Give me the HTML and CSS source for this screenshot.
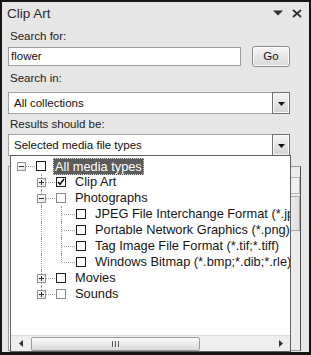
FILE: index.html
```html
<!DOCTYPE html>
<html>
<head>
<meta charset="utf-8">
<title>Clip Art</title>
<link rel="stylesheet" href="styles.css">
</head>
<body>
<div class="frame">
  <div class="titlebar">
    <span class="title">Clip Art</span>
    <svg class="tb-menu" width="10" height="6" viewBox="0 0 10 6"><path d="M0 0.5H10L5 5.5Z" fill="#2e2e2e"/></svg>
    <svg class="tb-close" width="10" height="9" viewBox="0 0 10 9"><path d="M1 1L9 8M9 1L1 8" stroke="#2e2e2e" stroke-width="1.7"/></svg>
  </div>
  <div class="content">
    <div class="label lbl-search">Search for:</div>
    <div class="search-row">
      <div class="textbox">flower</div>
      <div class="btn-go">Go</div>
    </div>
    <div class="label lbl-in">Search in:</div>
    <div class="combo combo-in">
      <span class="combo-text">All collections</span>
      <span class="combo-btn"><svg width="7" height="4" viewBox="0 0 7 4"><path d="M0 0H7L3.5 4Z" fill="#111"/></svg></span>
    </div>
    <div class="label lbl-res">Results should be:</div>
    <div class="combo combo-res">
      <span class="combo-text">Selected media file types</span>
      <span class="combo-btn"><svg width="7" height="4" viewBox="0 0 7 4"><path d="M0 0H7L3.5 4Z" fill="#111"/></svg></span>
    </div>
    <div class="results">
      <div class="results-area"></div>
      <div class="vscroll">
        <div class="vs-up"></div>
        <div class="vs-thumb"></div>
      </div>
    </div>
  </div>

  <div class="popup">
    <div class="tree">
      <div class="row">
        <span class="cell hl"><span class="box minus"></span></span>
        <span class="cb"></span>
        <span class="txt sel">All media types</span>
      </div>
      <div class="row">
        <span class="guide"></span>
        <span class="cell hl vfull"><span class="box plus"></span></span>
        <span class="cb checked"><svg width="8" height="8" viewBox="0 0 8 8"><path d="M1 4L3 6.3L7 1" fill="none" stroke="#111" stroke-width="1.6"/></svg></span>
        <span class="txt">Clip Art</span>
      </div>
      <div class="row">
        <span class="guide"></span>
        <span class="cell hl vfull"><span class="box minus"></span></span>
        <span class="cb gray"></span>
        <span class="txt">Photographs</span>
      </div>
      <div class="row">
        <span class="guide"></span>
        <span class="guide v"></span>
        <span class="cell hl vfull"></span>
        <span class="cb"></span>
        <span class="txt">JPEG File Interchange Format (*.jpg)</span>
      </div>
      <div class="row">
        <span class="guide"></span>
        <span class="guide v"></span>
        <span class="cell hl vfull"></span>
        <span class="cb"></span>
        <span class="txt">Portable Network Graphics (*.png)</span>
      </div>
      <div class="row">
        <span class="guide"></span>
        <span class="guide v"></span>
        <span class="cell hl vfull"></span>
        <span class="cb"></span>
        <span class="txt">Tag Image File Format (*.tif;*.tiff)</span>
      </div>
      <div class="row">
        <span class="guide"></span>
        <span class="guide v"></span>
        <span class="cell hl vhalf"></span>
        <span class="cb"></span>
        <span class="txt">Windows Bitmap (*.bmp;*.dib;*.rle)</span>
      </div>
      <div class="row">
        <span class="guide"></span>
        <span class="cell hl vfull"><span class="box plus"></span></span>
        <span class="cb"></span>
        <span class="txt">Movies</span>
      </div>
      <div class="row">
        <span class="guide"></span>
        <span class="cell hl vhalf"><span class="box plus"></span></span>
        <span class="cb gray"></span>
        <span class="txt">Sounds</span>
      </div>
    </div>
    <div class="hscroll">
      <span class="hs-btn"><svg width="4" height="7" viewBox="0 0 4 7"><path d="M4 0V7L0 3.5Z" fill="#333"/></svg></span>
      <span class="hs-thumb"><span class="grip"></span></span>
      <span class="hs-track"></span>
      <span class="hs-btn"><svg width="4" height="7" viewBox="0 0 4 7"><path d="M0 0V7L4 3.5Z" fill="#333"/></svg></span>
    </div>
  </div>
</div>
</body>
</html>
```

FILE: styles.css
```css
* {
  box-sizing: border-box;
  margin: 0;
  padding: 0;
}

html, body {
  width: 311px;
  height: 355px;
  overflow: hidden;
  background: #e6e6e6;
}

body {
  font-family: "Liberation Sans", Arial, sans-serif;
  font-size: 11.5px;
  color: #1f1f1f;
}

.frame {
  position: relative;
  width: 311px;
  height: 355px;
  border-style: solid;
  border-color: #161616;
  border-width: 2px 2px 3px 2px;
  background: #e6e6e6;
  display: flex;
  flex-direction: column;
}

/* title bar */
.titlebar {
  height: 22px;
  display: flex;
  align-items: center;
  padding: 0 7px 0 5px;
  flex: none;
}

.title {
  flex: 1;
  font-size: 13.5px;
  color: #2c2c2c;
}

.tb-menu {
  display: block;
  margin-right: 9px;
}

.tb-close {
  display: block;
}

/* body of the pane */
.content {
  flex: 1;
  display: flex;
  flex-direction: column;
  padding: 0 19px 0 6px;
}

.label {
  height: 14px;
  line-height: 14px;
  padding-left: 2px;
  color: #222;
  white-space: nowrap;
}

.lbl-search { margin-top: 5px; }
.lbl-in { margin-top: 4px; }
.lbl-res { margin-top: 3px; }

.search-row {
  margin-top: 3px;
  height: 21px;
  display: flex;
  align-items: center;
}

.textbox {
  width: 233px;
  height: 19px;
  line-height: 17px;
  background: #fff;
  border: 1px solid #9c9c9c;
  padding-left: 2px;
  color: #111;
}

.btn-go {
  margin-left: auto;
  width: 38px;
  height: 21px;
  line-height: 19px;
  text-align: center;
  border: 1px solid #8a8a8a;
  border-radius: 3px;
  background: linear-gradient(#f7f7f7, #e6e6e6 50%, #d9d9d9);
  box-shadow: inset 0 0 0 1px #fbfbfb;
  color: #111;
}

.combo {
  height: 22px;
  display: flex;
  align-items: stretch;
  background: #fff;
  border: 1px solid #a3a3a3;
}

.combo-in { margin-top: 7px; }
.combo-res { margin-top: 3px; }

.combo-text {
  flex: 1;
  line-height: 20px;
  padding-left: 5px;
  color: #111;
  white-space: nowrap;
}

.combo-btn {
  width: 18px;
  margin: -1px -1px -1px 0;
  border: 1px solid #6f6f6f;
  background: linear-gradient(#f6f6f6, #e2e2e2 55%, #d4d4d4);
  box-shadow: inset 0 0 0 1px #fafafa;
  display: flex;
  align-items: center;
  justify-content: center;
}

.combo-btn svg {
  display: block;
  margin-top: 1px;
}

/* underlying results list (mostly hidden by the dropdown) */
.results {
  flex: 1;
  margin-top: 10px;
  margin-right: -11px;
  margin-bottom: 1px;
  display: flex;
  border: 1px solid #9a9a9a;
  border-right-color: #4e4e4e;
  background: #fff;
}

.results-area {
  flex: 1;
}

.vscroll {
  width: 16px;
  background: #ececec;
  display: flex;
  flex-direction: column;
}

.vs-up {
  margin-top: 10px;
  height: 17px;
  border: 1px solid #b5b5b5;
  background: #f0f0f0;
}

.vs-thumb {
  margin-top: 2px;
  height: 35px;
  border: 1px solid #a8a8a8;
  background: linear-gradient(90deg, #f4f4f4, #dedede);
}

/* dropdown tree */
.popup {
  position: absolute;
  left: 8px;
  top: 153px;
  width: 281px;
  height: 197px;
  border: 1px solid #5f5f5f;
  background: #fff;
  display: flex;
  flex-direction: column;
}

.tree {
  flex: 1;
  overflow: hidden;
  padding-top: 2px;
  font-size: 12.8px;
  color: #161616;
}

.row {
  height: 16px;
  display: flex;
  align-items: center;
  padding-left: 6px;
  white-space: nowrap;
}

.guide {
  flex: none;
  width: 20px;
  height: 16px;
  position: relative;
}

.guide.v::before {
  content: "";
  position: absolute;
  left: 4px;
  top: 0;
  bottom: 0;
  border-left: 1px dotted #9a9a9a;
}

.cell {
  flex: none;
  width: 19px;
  height: 16px;
  position: relative;
}

.cell.hl::after {
  content: "";
  position: absolute;
  left: 5px;
  right: 1px;
  top: 8px;
  border-top: 1px dotted #9a9a9a;
}

.cell.vfull::before,
.cell.vhalf::before {
  content: "";
  position: absolute;
  left: 4px;
  top: 0;
  border-left: 1px dotted #9a9a9a;
}

.cell.vfull::before { bottom: 0; }
.cell.vhalf::before { height: 8px; }

.box {
  position: absolute;
  left: 0;
  top: 4px;
  width: 9px;
  height: 9px;
  border: 1px solid #959595;
  background: linear-gradient(135deg, #ffffff, #e4e4e4);
  z-index: 1;
}

.box::before {
  content: "";
  position: absolute;
  left: 1px;
  top: 3px;
  width: 5px;
  height: 1px;
  background: #333;
}

.box.plus::after {
  content: "";
  position: absolute;
  left: 3px;
  top: 1px;
  width: 1px;
  height: 5px;
  background: #333;
}

.cb {
  flex: none;
  width: 10px;
  height: 10px;
  border: 1px solid #1c1c1c;
  background: #fff;
  display: flex;
  align-items: center;
  justify-content: center;
}

.cb.gray {
  border-color: #8c8c8c;
}

.cb svg {
  display: block;
}

.txt {
  margin-left: 7px;
  padding: 0 2px;
  line-height: 16px;
}

.txt.sel {
  background: #5c5c5c;
  color: #fff;
  line-height: 15px;
  height: 17px;
  padding-top: 1px;
  outline: 1px dotted #d0d0d0;
  outline-offset: -1px;
}

/* horizontal scrollbar of the dropdown */
.hscroll {
  flex: none;
  height: 16px;
  display: flex;
  align-items: stretch;
  background: #eeeeee;
  border-top: 1px solid #dcdcdc;
}

.hs-btn {
  flex: none;
  width: 19px;
  display: flex;
  align-items: center;
  justify-content: center;
}

.hs-btn svg {
  display: block;
}

.hs-thumb {
  flex: none;
  width: 169px;
  margin: 1px 0 0 1px;
  border: 1px solid #9b9b9b;
  border-radius: 2px;
  background: linear-gradient(#fbfbfb, #e9e9e9 50%, #d9d9d9);
  display: flex;
  align-items: center;
  justify-content: center;
}

.grip {
  width: 7px;
  height: 6px;
  background: repeating-linear-gradient(90deg, #5a5a5a 0 1px, transparent 1px 3px);
}

.hs-track {
  flex: 1;
}
```
